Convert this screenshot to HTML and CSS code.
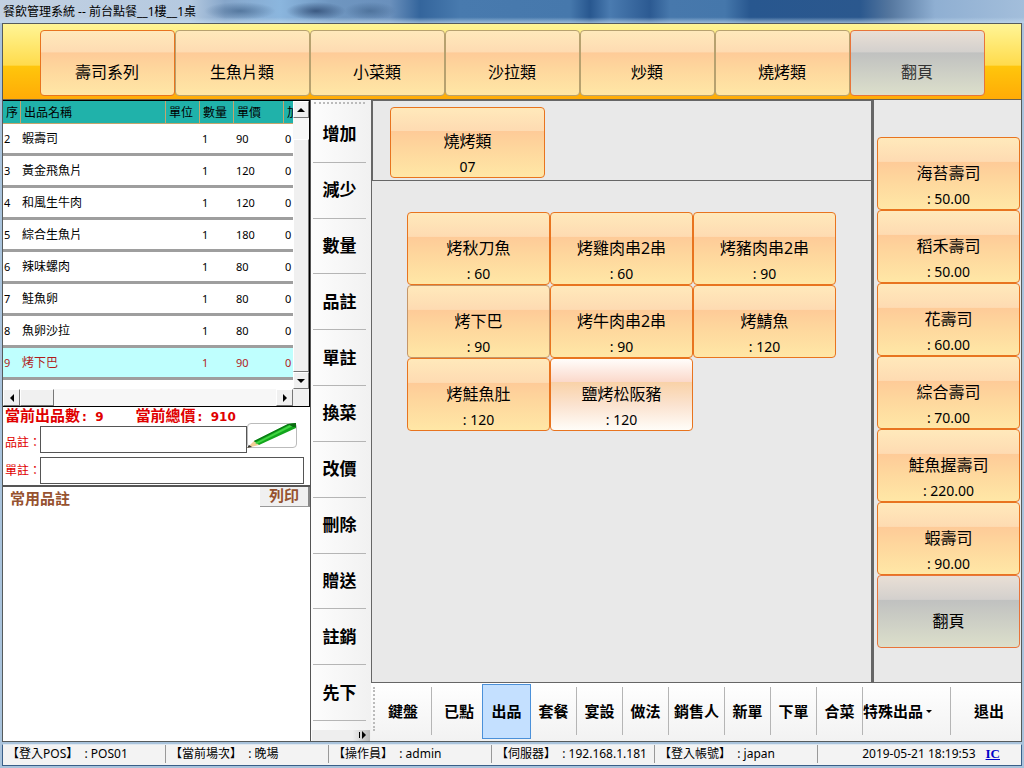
FILE: index.html
```html
<!DOCTYPE html>
<html lang="zh-Hant">
<head>
<meta charset="utf-8">
<title>餐飲管理系統 -- 前台點餐__1樓__1桌</title>
<link rel="stylesheet" href="styles.css">
</head>
<body>
<header class="titlebar">餐飲管理系統 -- 前台點餐__1樓__1桌</header>

<div class="window">
  <nav class="categories">
    <button class="tile cat cat-active">壽司系列</button>
    <button class="tile cat">生魚片類</button>
    <button class="tile cat">小菜類</button>
    <button class="tile cat">沙拉類</button>
    <button class="tile cat">炒類</button>
    <button class="tile cat">燒烤類</button>
    <button class="tile cat pager pager-muted">翻頁</button>
  </nav>

  <div class="body">
    <section class="order">
      <div class="grid-box">
        <div class="grid-view">
          <table class="lines">
            <colgroup><col class="c-no"><col class="c-name"><col class="c-unit"><col class="c-qty"><col class="c-price"><col class="c-add"></colgroup>
            <thead><tr><th>序</th><th>出品名稱</th><th>單位</th><th>數量</th><th>單價</th><th>加</th></tr></thead>
            <tbody>
              <tr><td>2</td><td>蝦壽司</td><td></td><td>1</td><td>90</td><td>0</td></tr>
              <tr><td>3</td><td>黃金飛魚片</td><td></td><td>1</td><td>120</td><td>0</td></tr>
              <tr><td>4</td><td>和風生牛肉</td><td></td><td>1</td><td>120</td><td>0</td></tr>
              <tr><td>5</td><td>綜合生魚片</td><td></td><td>1</td><td>180</td><td>0</td></tr>
              <tr><td>6</td><td>辣味螺肉</td><td></td><td>1</td><td>80</td><td>0</td></tr>
              <tr><td>7</td><td>鮭魚卵</td><td></td><td>1</td><td>80</td><td>0</td></tr>
              <tr><td>8</td><td>魚卵沙拉</td><td></td><td>1</td><td>80</td><td>0</td></tr>
              <tr class="selected"><td>9</td><td>烤下巴</td><td></td><td>1</td><td>90</td><td>0</td></tr>
            </tbody>
          </table>
        </div>
        <div class="vscroll">
          <button class="sb" aria-label="向上"><svg width="8" height="4" viewBox="0 0 8 4"><path d="M4 0L8 4H0z"/></svg></button>
          <div class="vtrack"><div class="vthumb"></div></div>
          <button class="sb" aria-label="向下"><svg width="8" height="4" viewBox="0 0 8 4"><path d="M0 0H8L4 4z"/></svg></button>
        </div>
        <div class="hscroll">
          <button class="sb" aria-label="向左"><svg width="4" height="8" viewBox="0 0 4 8"><path d="M4 0V8L0 4z"/></svg></button>
          <div class="htrack"><div class="hthumb"></div></div>
          <button class="sb" aria-label="向右"><svg width="4" height="8" viewBox="0 0 4 8"><path d="M0 0V8L4 4z"/></svg></button>
        </div>
      </div>

      <div class="notes">
        <div class="totals"><span>當前出品數<b>:&nbsp; 9</b></span><span>當前總價<b>:&nbsp; 910</b></span></div>
        <div class="note-row">
          <label class="label-low" for="item-note">品註：</label>
          <input id="item-note" class="note-item" type="text">
          <button class="pencil" aria-label="編輯">
            <svg width="50" height="26" viewBox="0 0 50 26">
              <path d="M0 25L7 18L12 22z" fill="#f3cf98"/>
              <path d="M0 25L2 22L5 24z" fill="#333"/>
              <path d="M7 18L41 1L49 0L49 5L12 22z" fill="#12a51c"/>
              <path d="M7 18L41 1L44 1L8 19z" fill="#0a7a14"/>
              <path d="M8 20L43 2L46 3L10 21z" fill="#3fd640"/>
              <path d="M41 1L49 0L49 4L46 4z" fill="#0b6b13"/>
            </svg>
          </button>
        </div>
        <div class="note-row">
          <label for="order-note">單註：</label>
          <input id="order-note" class="note-order" type="text">
        </div>
      </div>

      <div class="common">
        <h2>常用品註</h2>
        <button class="print">列印</button>
      </div>
    </section>

    <aside class="actions">
      <div class="grip-h"></div>
      <button>增加</button>
      <button>減少</button>
      <button>數量</button>
      <button>品註</button>
      <button>單註</button>
      <button>換菜</button>
      <button>改價</button>
      <button>刪除</button>
      <button>贈送</button>
      <button>註銷</button>
      <button>先下</button>
      <div class="overflow"><svg width="7" height="8" viewBox="0 0 7 8"><path d="M0 1H1V7H0zM3 0L7 4L3 8z"/></svg></div>
    </aside>

    <div class="right">
      <div class="panels">
        <main class="center">
          <div class="current">
            <button class="tile item sub-cat"><span>燒烤類</span><small>07</small></button>
          </div>
          <div class="dishes">
            <button class="tile item"><span>烤秋刀魚</span><small>: 60</small></button>
            <button class="tile item"><span>烤雞肉串2串</span><small>: 60</small></button>
            <button class="tile item"><span>烤豬肉串2串</span><small>: 90</small></button>
            <button class="tile item dim"><span>烤下巴</span><small>: 90</small></button>
            <button class="tile item"><span>烤牛肉串2串</span><small>: 90</small></button>
            <button class="tile item"><span>烤鯖魚</span><small>: 120</small></button>
            <button class="tile item"><span>烤鮭魚肚</span><small>: 120</small></button>
            <button class="tile item hot"><span>鹽烤松阪豬</span><small>: 120</small></button>
          </div>
        </main>
        <div class="quick">
          <button class="tile item"><span>海苔壽司</span><small>: 50.00</small></button>
          <button class="tile item"><span>稻禾壽司</span><small>: 50.00</small></button>
          <button class="tile item"><span>花壽司</span><small>: 60.00</small></button>
          <button class="tile item"><span>綜合壽司</span><small>: 70.00</small></button>
          <button class="tile item"><span>鮭魚握壽司</span><small>: 220.00</small></button>
          <button class="tile item"><span>蝦壽司</span><small>: 90.00</small></button>
          <button class="tile item pager"><span>翻頁</span></button>
        </div>
      </div>
      <div class="toolbar">
        <div class="grip-v"></div>
        <button class="w-first">鍵盤</button>
        <button class="w-second">已點</button>
        <button class="w-on">出品</button>
        <button>套餐</button>
        <button>宴設</button>
        <button>做法</button>
        <button class="w-three">銷售人</button>
        <button>新單</button>
        <button>下單</button>
        <button>合菜</button>
        <button class="w-menu">特殊出品<svg width="6" height="3" viewBox="0 0 6 3"><path d="M0 0H6L3 3z"/></svg></button>
        <button class="w-last">退出</button>
      </div>
    </div>
  </div>
</div>

<footer class="status">
  <span>【登入POS】&nbsp; : POS01</span>
  <span>【當前場次】&nbsp; : 晚場</span>
  <span>【操作員】&nbsp; : admin</span>
  <span>【伺服器】&nbsp; : 192.168.1.181</span>
  <span>【登入帳號】&nbsp; : japan</span>
  <div class="clock"><time>2019-05-21 18:19:53</time><a href="#">IC</a></div>
</footer>
</body>
</html>
```
FILE: styles.css
```css
* { box-sizing: border-box; }

body {
  margin: 0;
  min-height: 100vh;
  display: flex;
  flex-direction: column;
  background: #a9c3dc;
  color: #000;
  font: 12px/16px "Noto Sans", "Noto Sans CJK TC", sans-serif;
}

button {
  margin: 0;
  padding: 0;
  border: 0;
  background: none;
  color: inherit;
  font: inherit;
}

.titlebar {
  height: 23px;
  padding: 4px 3px 3px;
  background:
    linear-gradient(#ffffff00 75%, #c4dcf0aa),
    radial-gradient(ellipse 36px 9px at 240px 11px, #3c5f87aa, #3c5f8700),
    radial-gradient(ellipse 30px 9px at 316px 11px, #2c4870cc, #2c487000),
    radial-gradient(ellipse 26px 9px at 370px 11px, #3c5f8799, #3c5f8700),
    linear-gradient(90deg, #c3d1e2 0, #b4c9e0 190px, #86a6ca 225px, #8bb6de 280px, #6f96c0 330px, #6a90bc 390px, #34659c 420px, #487aae 460px, #4678ac 570px, #28578f 590px, #4a7bb0 610px, #2c5a92 650px, #4778ac 670px, #4577ab 725px, #28578f 750px, #2b588e 860px, #55779f 890px, #8fafd2 935px, #a3bedb 100%);
}

.window {
  flex: 1;
  display: flex;
  flex-direction: column;
  margin: 0 2px;
  border: 1px solid #565b5c;
  background: #e9e9e9;
}

.categories {
  display: flex;
  justify-content: center;
  padding: 6px 0 3px;
  border-bottom: 1px solid #6b6250;
  background: linear-gradient(#fff596, #ffdb4c 55%, #ffc60c 56%, #ffab06);
}

.tile {
  border: 1px solid #e8741f;
  border-radius: 4px;
  background: linear-gradient(#ffe9bb, #fedbb2 33%, #fecb98 34%, #fed79d 60%, #ffe7a6);
  font-size: 16px;
  line-height: 24px;
}

.cat {
  flex: 0 1 135px;
  height: 66px;
  padding-top: 17px;
  border-color: #b7a16f;
}

.cat-active { border-color: #e8741f; }

.tile.pager {
  border-color: #e8743a;
  background: linear-gradient(#e9dfd5, #d3d0cd 33%, #c0c1c0 34%, #dcdfcb);
}

.pager-muted { color: #333; }

.item {
  display: flex;
  flex-direction: column;
  align-items: center;
  height: 73px;
  padding-top: 23px;
}

.item small {
  margin-top: 2px;
  font-size: 14px;
}

.tile.hot { background: linear-gradient(#fffdfb, #fbd9cb 32%, #f9d2a8 33%, #fbe3d0 65%, #fffdf8); }
.tile.dim { border-color: #c59669; }

.body {
  flex: 1;
  display: flex;
}

/* Order list */
.order {
  flex: 0 0 308px;
  display: flex;
  flex-direction: column;
  border-right: 1px solid #555;
  background: #fff;
}

.grid-box {
  display: grid;
  grid-template-columns: 1fr 16px;
  grid-template-rows: 288px 17px;
  border: 1px solid #000;
  border-left: 0;
  background: #f0f0f0;
}

.grid-view {
  overflow: hidden;
  background: #fff;
}

.lines {
  width: 320px;
  table-layout: fixed;
  border-collapse: separate;
  border-spacing: 0;
  white-space: nowrap;
}

.c-no { width: 18px; }
.c-name { width: 145px; }
.c-unit { width: 34px; }
.c-qty { width: 34px; }
.c-price { width: 50px; }
.c-add { width: 39px; }

.lines th {
  height: 23px;
  padding: 1px 3px 0;
  border: 1px solid #c5a56d;
  border-top: 0;
  border-left: 0;
  background: #20b2aa;
  font-weight: 400;
  text-align: left;
}

.lines td {
  height: 32px;
  padding: 1px 1px 0;
  border-bottom: 3px solid #9e9e9e;
  font-size: 11px;
}

.lines td:nth-child(2) { font-size: 12px; }
.lines td:nth-child(4), .lines td:nth-child(5) { padding-left: 2px; }
.lines .selected { background: #bffffe; color: #b01c1c; }

.vscroll, .hscroll { display: flex; }
.vscroll { flex-direction: column; }

.sb, .vthumb, .hthumb {
  border: 1px solid #fff;
  border-right-color: #777;
  border-bottom-color: #777;
  background: #f0f0f0;
}

.sb {
  flex: 0 0 17px;
  display: flex;
  align-items: center;
  justify-content: center;
}

.vtrack, .htrack {
  flex: 1;
  display: flex;
  background: #f7f7f7;
}

.vtrack { padding-top: 21px; }
.vthumb, .hthumb { flex: 1; }
.hthumb { max-width: 34px; }

.notes {
  display: grid;
  gap: 4px;
  padding: 0 0 1px 2px;
  border-bottom: 2px solid #555;
  color: #e00000;
}

.totals {
  display: flex;
  gap: 32px;
  height: 15px;
  font: bold 15px/15px "Noto Sans CJK TC", sans-serif;
}

.totals b {
  margin-left: 2px;
  font: bold 12px/12px "DejaVu Sans", sans-serif;
}

.note-row {
  display: flex;
  align-items: center;
  height: 27px;
}

.note-row label {
  flex: 0 0 35px;
  overflow: hidden;
  white-space: nowrap;
}

.note-row .label-low { padding-top: 6px; }

.note-row input {
  min-width: 0;
  height: 27px;
  border: 1px solid #555;
  background: #fff;
  font: inherit;
}

.note-item { flex: 0 1 207px; }
.note-order { flex: 0 1 264px; }

.pencil {
  align-self: flex-start;
  display: flex;
  width: 50px;
  height: 25px;
  margin-top: -3px;
  border: 1px solid #bbb;
  border-radius: 4px;
}

.pencil svg { margin: -1px; }

.common {
  flex: 1;
  display: flex;
  align-items: flex-start;
  justify-content: space-between;
  color: #96522f;
  font: bold 15px/16px "Noto Sans CJK TC", sans-serif;
}

.common h2 {
  margin: 3px 7px;
  font: inherit;
}

.print {
  width: 50px;
  height: 20px;
  padding-bottom: 3px;
  border-right: 2px solid #888;
  border-bottom: 1px solid #999;
  background: #f0f0f0;
}

/* Vertical action strip */
.actions {
  flex: 0 0 60px;
  display: flex;
  flex-direction: column;
  background: linear-gradient(90deg, #fdfdfd, #f1f1f1);
}

.grip-h {
  height: 4px;
  margin: 0 6px 3px 3px;
  border-bottom: 2px dotted #bbb;
}

.actions button {
  flex: 1;
  margin: 0 5px 0 2px;
  padding-bottom: 2px;
  border-bottom: 1px solid #b5b5b5;
  font: bold 17px/24px "Noto Sans CJK TC", sans-serif;
}

.overflow {
  display: flex;
  align-items: center;
  justify-content: flex-end;
  height: 11px;
  margin: 9px 1px 0;
  padding-right: 4px;
  background: linear-gradient(90deg, #eee 70%, #bbb);
}

/* Menu area */
.right {
  flex: 1;
  min-width: 0;
  display: flex;
  flex-direction: column;
}

.panels {
  flex: 1;
  display: flex;
  border-bottom: 1px solid #666;
}

.center {
  flex: 1;
  border-left: 1px solid #666;
  border-right: 3px solid #666;
}

.current {
  height: 81px;
  padding: 6px 17px;
  border: 1px solid #666;
  border-width: 1px 0 1px 1px;
}

.current .item {
  width: 155px;
  height: 71px;
  padding-top: 21px;
}

.dishes {
  display: grid;
  grid-template-columns: repeat(3, minmax(0, 143px));
  justify-content: center;
  padding-top: 31px;
}

.quick {
  flex: 0 0 147px;
  display: flex;
  flex-direction: column;
  justify-content: center;
  padding: 2px 1px 0 3px;
}

.quick .pager { padding-top: 33px; }

.toolbar {
  display: flex;
  height: 58px;
  padding: 1px 0 2px 2px;
  background: linear-gradient(#fff, #f2f2f2);
  font: bold 15px/20px "Noto Sans CJK TC", sans-serif;
}

.grip-v {
  margin: 3px 0 8px;
  border-left: 2px dotted #bbb;
}

.toolbar button {
  flex: 0 1 46px;
  margin: 3px 0 4px;
  border-right: 1px solid #b5b5b5;
  white-space: nowrap;
}

.toolbar .w-first { flex-basis: 57px; }
.toolbar .w-second { flex-basis: 50px; padding-left: 4px; border-right: 0; }
.toolbar .w-on {
  flex-basis: 49px;
  margin: 0;
  padding-bottom: 2px;
  border: 1px solid #4a90d9;
  background: #c4e0ff;
}
.toolbar .w-three { flex-basis: 56px; }
.toolbar .w-menu {
  flex-basis: 88px;
  display: flex;
  align-items: center;
  gap: 3px;
}
.toolbar .w-last { flex: 1; padding-left: 6px; border-right: 0; }

/* Status bar */
.status {
  display: flex;
  height: 22px;
  margin: 2px;
  border: 1px solid #3a5f88;
  border-top-color: #dfe8f0;
  background: #f3f3f3;
  line-height: 18px;
}

.status > span {
  flex: 0 1 163px;
  margin-bottom: 2px;
  padding-left: 4px;
  border-right: 1px solid #999;
  white-space: nowrap;
}

.clock {
  flex: 1;
  display: flex;
  justify-content: flex-end;
  gap: 8px;
  padding-right: 19px;
  white-space: nowrap;
}

.clock a {
  padding: 0 2px;
  color: #0000c8;
  font: bold 13px/18px "Liberation Serif", serif;
}
```
